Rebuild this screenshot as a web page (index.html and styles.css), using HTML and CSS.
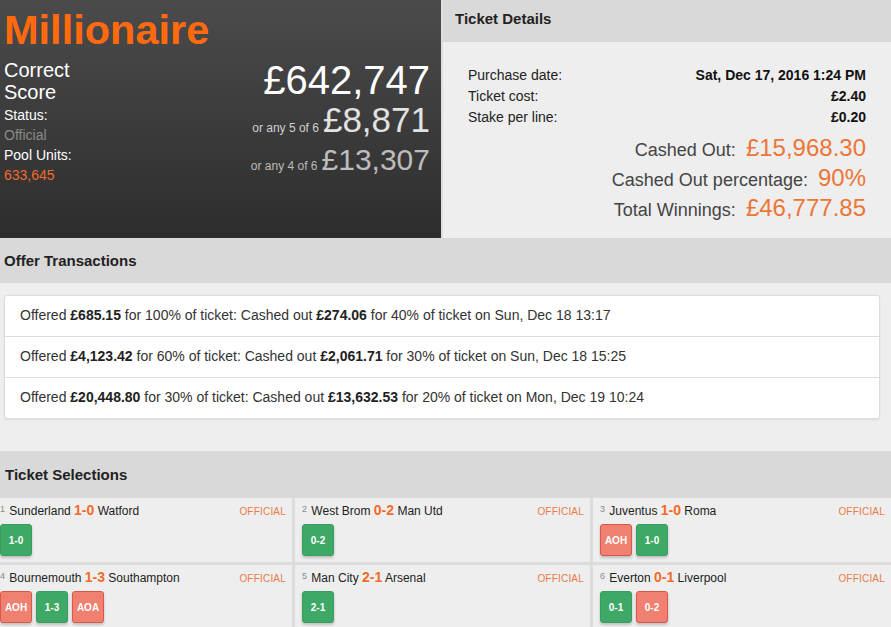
FILE: index.html
```html
<!DOCTYPE html>
<html lang="en">
<head>
<meta charset="utf-8">
<title>Millionaire Ticket</title>
<link rel="stylesheet" href="styles.css">
</head>
<body>
<div class="top">
  <section class="hero">
    <h1 class="hero-title">Millionaire</h1>
    <div class="hero-body">
      <div class="hero-info">
        <div class="game">Correct<br>Score</div>
        <div class="info-lines">
          <div class="info-label">Status:</div>
          <div class="info-muted">Official</div>
          <div class="info-label">Pool Units:</div>
          <div class="info-accent">633,645</div>
        </div>
      </div>
      <div class="prizes">
        <div class="prize-main">£642,747</div>
        <div class="prize-alt prize-alt-5"><span class="prize-note">or any 5 of 6</span>£8,871</div>
        <div class="prize-alt prize-alt-4"><span class="prize-note">or any 4 of 6</span>£13,307</div>
      </div>
    </div>
  </section>
  <section class="details">
    <h2 class="panel-head panel-head-details">Ticket Details</h2>
    <div class="details-body">
      <div class="detail-row"><span>Purchase date:</span><b>Sat, Dec 17, 2016 1:24 PM</b></div>
      <div class="detail-row"><span>Ticket cost:</span><b>£2.40</b></div>
      <div class="detail-row"><span>Stake per line:</span><b>£0.20</b></div>
      <div class="totals">
        <div class="total-row"><span class="total-label">Cashed Out:</span><span class="total-value">£15,968.30</span></div>
        <div class="total-row"><span class="total-label">Cashed Out percentage:</span><span class="total-value">90%</span></div>
        <div class="total-row"><span class="total-label">Total Winnings:</span><span class="total-value">£46,777.85</span></div>
      </div>
    </div>
  </section>
</div>

<h2 class="panel-head panel-head-section">Offer Transactions</h2>
<div class="offers-wrap">
  <div class="offers">
    <div class="offer">Offered <b>£685.15</b> for 100% of ticket: Cashed out <b>£274.06</b> for 40% of ticket on Sun, Dec 18 13:17</div>
    <div class="offer">Offered <b>£4,123.42</b> for 60% of ticket: Cashed out <b>£2,061.71</b> for 30% of ticket on Sun, Dec 18 15:25</div>
    <div class="offer">Offered <b>£20,448.80</b> for 30% of ticket: Cashed out <b>£13,632.53</b> for 20% of ticket on Mon, Dec 19 10:24</div>
  </div>
</div>

<h2 class="panel-head panel-head-section panel-head-sel">Ticket Selections</h2>
<div class="selections">
  <div class="sel">
    <div class="sel-head"><span class="match"><span class="num">1</span> Sunderland <b class="score">1-0</b> Watford</span><span class="status">OFFICIAL</span></div>
    <div class="picks"><span class="pick win">1-0</span></div>
  </div>
  <div class="sel">
    <div class="sel-head"><span class="match"><span class="num">2</span> West Brom <b class="score">0-2</b> Man Utd</span><span class="status">OFFICIAL</span></div>
    <div class="picks"><span class="pick win">0-2</span></div>
  </div>
  <div class="sel">
    <div class="sel-head"><span class="match"><span class="num">3</span> Juventus <b class="score">1-0</b> Roma</span><span class="status">OFFICIAL</span></div>
    <div class="picks"><span class="pick lose">AOH</span><span class="pick win">1-0</span></div>
  </div>
  <div class="sel">
    <div class="sel-head"><span class="match"><span class="num">4</span> Bournemouth <b class="score">1-3</b> Southampton</span><span class="status">OFFICIAL</span></div>
    <div class="picks"><span class="pick lose">AOH</span><span class="pick win">1-3</span><span class="pick lose">AOA</span></div>
  </div>
  <div class="sel">
    <div class="sel-head"><span class="match"><span class="num">5</span> Man City <b class="score">2-1</b> Arsenal</span><span class="status">OFFICIAL</span></div>
    <div class="picks"><span class="pick win">2-1</span></div>
  </div>
  <div class="sel">
    <div class="sel-head"><span class="match"><span class="num">6</span> Everton <b class="score">0-1</b> Liverpool</span><span class="status">OFFICIAL</span></div>
    <div class="picks"><span class="pick win">0-1</span><span class="pick lose">0-2</span></div>
  </div>
</div>
</body>
</html>
```

FILE: styles.css
```css
* { box-sizing: border-box; }

html, body {
  margin: 0;
  padding: 0;
}

body {
  background: #eeeeee;
  font-family: "Liberation Sans", Arial, sans-serif;
  color: #222;
  overflow: hidden;
}

h1, h2 { margin: 0; }

/* ---------- top row ---------- */
.top {
  display: flex;
  height: 238px;
}

.hero {
  width: 441px;
  flex: none;
  background: linear-gradient(#4b4b4b, #2d2d2d);
  padding: 6px 11px 0 4px;
  color: #fff;
}

.hero-title {
  font-size: 41.5px;
  line-height: 48px;
  font-weight: bold;
  color: #ff6a0f;
}

.hero-body {
  display: flex;
  justify-content: space-between;
}

.game {
  margin-top: 5px;
  font-size: 20px;
  line-height: 22px;
}

.info-lines {
  margin-top: 2px;
  font-size: 14px;
  line-height: 20px;
}

.info-muted { color: #8a8a8a; }
.info-accent { color: #f26b2d; }

.prizes {
  margin-top: 6px;
  text-align: right;
}

.prize-main {
  font-size: 40px;
  line-height: 40px;
  color: #fff;
}

.prize-alt {
  font-size: 35px;
  line-height: 39px;
}

.prize-alt-5 { color: #e2e2e2; }

.prize-alt-4 {
  font-size: 30px;
  line-height: 41px;
  color: #bdbdbd;
}

.prize-note {
  font-size: 12px;
  line-height: 1;
  margin-right: 4px;
}

.prize-alt-5 .prize-note { color: #cfcfcf; }
.prize-alt-4 .prize-note { color: #bbbbbb; }

/* ---------- ticket details ---------- */
.details {
  flex: 1;
  border-left: 2px solid #dedede;
  background: #eeeeee;
}

.panel-head {
  background: #d9d9d9;
  font-size: 15px;
  line-height: 20px;
  font-weight: bold;
  color: #222;
}

.panel-head-details {
  height: 42px;
  padding: 9px 12px 0;
}

.details-body {
  padding: 23px 25px 0 25px;
}

.detail-row {
  display: flex;
  justify-content: space-between;
  font-size: 14px;
  line-height: 21px;
  color: #222;
}

.detail-row b {
  font-size: 14px;
  color: #111;
}

.totals {
  margin-top: 5px;
  text-align: right;
  font-size: 24px;
  line-height: 30px;
}

.total-label {
  font-size: 18px;
  line-height: 1;
  color: #444;
  margin-right: 10px;
}

.total-value {
  color: #ec7636;
}

/* ---------- sections ---------- */
.panel-head-section {
  height: 45px;
  padding: 13px 4px 0;
}

.panel-head-sel {
  height: 46px;
  padding: 14px 5px 0;
}

.offers-wrap {
  padding: 12px 11px 32px 4px;
}

.offers {
  background: #fff;
  border: 1px solid #dddddd;
  border-radius: 3px;
  box-shadow: 0 1px 2px rgba(0, 0, 0, 0.08);
}

.offer {
  padding: 11px 15px 12px;
  font-size: 14px;
  line-height: 17px;
  color: #333;
}

.offer + .offer {
  border-top: 1px solid #dddddd;
}

.offer b { color: #222; }

/* ---------- selections ---------- */
.selections {
  display: grid;
  grid-template-columns: 299px 295px 1fr;
  gap: 3px;
  margin-left: -7px;
  padding-top: 1px;
  background: #dcdcdc;
}

.sel {
  background: #eeeeee;
  padding: 2px 6px 6px 7px;
}

.sel-head {
  display: flex;
  justify-content: space-between;
  align-items: baseline;
  font-size: 12px;
  line-height: 18px;
}

.match { color: #222; }

.num {
  font-size: 9px;
  color: #8a8a8a;
  vertical-align: 3px;
  margin-right: 1px;
}

.score {
  font-size: 14px;
  color: #f26b2a;
}

.status {
  font-size: 10px;
  color: #ea7b47;
  letter-spacing: 0.2px;
}

.picks {
  display: flex;
  gap: 4px;
  margin-top: 3px;
}

.pick {
  width: 32px;
  height: 32px;
  display: inline-flex;
  align-items: center;
  justify-content: center;
  border-radius: 3px;
  font-size: 10px;
  font-weight: bold;
  color: #fff;
  box-shadow: 0 2px 3px rgba(0, 0, 0, 0.2);
}

.win {
  background: #3ea866;
  border: 1px solid #399d5e;
}

.lose {
  background: #f08070;
  border: 1px solid #d9564a;
}
```
